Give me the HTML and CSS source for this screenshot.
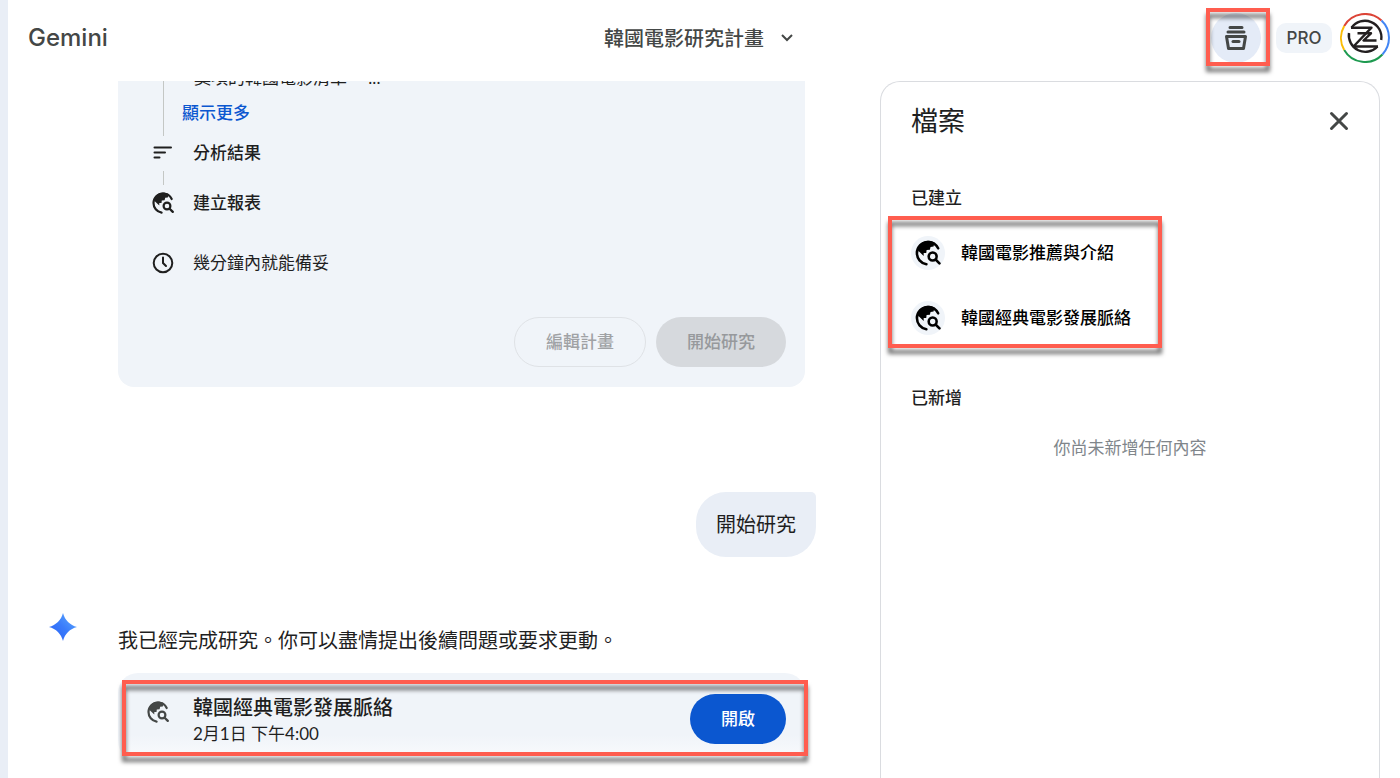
FILE: index.html
```html
<!DOCTYPE html>
<html lang="zh-TW">
<head>
    <meta charset="UTF-8">
    <meta name="viewport" content="width=device-width, initial-scale=1.0">
    <title>Gemini</title>
    <link rel="stylesheet" href="styles.css">
</head>
<body>
    <svg class="symbols" aria-hidden="true">
        <symbol id="icon-research" viewBox="0 0 24 24">
            <path fill="none" stroke="currentColor" stroke-width="2.2" stroke-linecap="round" d="M10.6 21.600C5.800 20.800 2.500 16.800 2.500 12A9.500 9.500 0 0 1 12 2.500c4 0 7.200 2.200 8.700 5.500"/>
            <path fill="currentColor" d="M12 1.500c2 0 4 .5 5.500 1.500L16.800 6.500l-2.600.3-.6 2.400-2.800.3-.3 2.500H8.300v2.500L3 9.500C4 5 7.500 1.500 12 1.500z"/>
            <circle cx="16" cy="15" r="3.400" fill="none" stroke="currentColor" stroke-width="2.200"/>
            <path fill="none" stroke="currentColor" stroke-width="2.300" stroke-linecap="round" d="M18.600 17.700l3.200 3.200"/>
        </symbol>
    </svg>

    <aside class="rail"></aside>

    <div class="app">
        <header class="topbar">
            <span class="brand">Gemini</span>
            <button type="button" class="chat-title">
                韓國電影研究計畫
                <svg width="14" height="10" viewBox="0 0 14 10"><path d="M2 2l5 5 5-5"/></svg>
            </button>
            <div class="account">
                <button type="button" class="files-btn" aria-label="檔案">
                    <svg width="24" height="26" viewBox="0 0 24 26">
                        <path d="M6 2.500h12M4 7h16M2.500 11.500h19l-2 12h-15z"/>
                        <path d="M9 16.500h6"/>
                    </svg>
                    <span class="mark mark-files"></span>
                </button>
                <span class="badge">PRO</span>
                <button type="button" class="avatar" aria-label="帳戶">
                    <svg width="50" height="50" viewBox="0 0 50 50">
                        <g fill="none" stroke-width="2">
                            <path stroke="#dc4437" d="M4.200 13A24 24 0 0 1 41.500 7.600"/>
                            <path stroke="#4285f4" d="M41.500 7.600A24 24 0 0 1 42.400 41.500"/>
                            <path stroke="#1e9a50" d="M42.400 41.500A24 24 0 0 1 4.200 37"/>
                            <path stroke="#fbbc05" d="M4.200 37A24 24 0 0 1 4.200 13"/>
                        </g>
                        <g fill="none" stroke="#231f20" stroke-width="2.400" stroke-linejoin="round">
                            <path d="M11.500 14.700A16.500 16.500 0 0 1 41.200 27"/>
                            <path d="M37.500 33.500A16.500 16.500 0 0 1 9 20"/>
                            <path d="M11 14.700h20.500L13.500 33.500H38"/>
                            <path d="M17.500 20.300h13.500L23.500 27.500h13"/>
                        </g>
                    </svg>
                </button>
            </div>
        </header>

        <div class="content">
            <main class="chat">
                <section class="plan">
                    <p class="plan-detail">獎項的韓國電影清單。 ...</p>
                    <button type="button" class="more">顯示更多</button>
                    <ul class="steps">
                        <li>
                            <svg width="24" height="24" viewBox="0 0 24 24"><path class="line" d="M3.500 6.500h16.500M3.500 11.500h10.500M3.500 16.500h5"/></svg>
                            分析結果
                        </li>
                        <li>
                            <svg width="24" height="24"><use href="#icon-research"/></svg>
                            建立報表
                        </li>
                        <li class="eta">
                            <svg width="24" height="24" viewBox="0 0 24 24"><path class="line" d="M12 6.500V12l3 3"/><circle class="line" cx="12" cy="12" r="9.300"/></svg>
                            幾分鐘內就能備妥
                        </li>
                    </ul>
                    <div class="plan-actions">
                        <button type="button" class="btn btn-outline" disabled>編輯計畫</button>
                        <button type="button" class="btn btn-gray" disabled>開始研究</button>
                    </div>
                </section>

                <p class="bubble">開始研究</p>

                <section class="reply">
                    <svg class="spark" width="28" height="28" viewBox="0 0 28 28">
                        <defs>
                            <linearGradient id="spark-fill" x1="0" y1="1" x2="1" y2="0">
                                <stop offset="0" stop-color="#2a5ff6"/>
                                <stop offset="0.500" stop-color="#3a7cfb"/>
                                <stop offset="1" stop-color="#62b0ff"/>
                            </linearGradient>
                        </defs>
                        <path fill="url(#spark-fill)" d="M14 0c1.800 7 7 12.200 14 14-7 1.800-12.200 7-14 14C12.200 21 7 15.800 0 14 7 12.200 12.200 7 14 0z"/>
                    </svg>
                    <div class="reply-body">
                        <p class="reply-text">我已經完成研究。你可以盡情提出後續問題或要求更動。</p>
                        <article class="report">
                            <svg class="report-icon" width="24" height="24"><use href="#icon-research"/></svg>
                            <div class="report-info">
                                <h3>韓國經典電影發展脈絡</h3>
                                <p>2月1日 下午4:00</p>
                            </div>
                            <button type="button" class="btn btn-primary">開啟</button>
                            <span class="mark mark-report"></span>
                        </article>
                    </div>
                </section>
            </main>

            <aside class="files">
                <div class="files-head">
                    <h2>檔案</h2>
                    <button type="button" class="close" aria-label="關閉">
                        <svg width="20" height="20" viewBox="0 0 20 20"><path d="M2.500 2.500l15 15M17.500 2.500l-15 15"/></svg>
                    </button>
                </div>
                <h3>已建立</h3>
                <ul class="file-list">
                    <li>
                        <a href="#">
                            <span class="file-icon"><svg width="28" height="28"><use href="#icon-research"/></svg></span>
                            韓國電影推薦與介紹
                        </a>
                    </li>
                    <li>
                        <a href="#">
                            <span class="file-icon"><svg width="28" height="28"><use href="#icon-research"/></svg></span>
                            韓國經典電影發展脈絡
                        </a>
                    </li>
                    <li class="mark mark-list" aria-hidden="true"></li>
                </ul>
                <h3>已新增</h3>
                <p class="empty">你尚未新增任何內容</p>
            </aside>
        </div>
    </div>
</body>
</html>
```
FILE: styles.css
```css
* {
    box-sizing: border-box;
}
body {
    margin: 0;
    height: 100vh;
    display: flex;
    overflow: hidden;
    background: #fff;
    color: #1f1f1f;
    font-family: Lato, "Noto Sans CJK TC", sans-serif;
    font-size: 17px;
    line-height: 24px;
}
h2, h3, p, ul {
    margin: 0;
    padding: 0;
    font-size: 17px;
    font-weight: 400;
}
ul {
    list-style: none;
}
button {
    padding: 0;
    border: none;
    background: none;
    color: inherit;
    font: inherit;
    cursor: pointer;
}
svg {
    display: block;
    flex: none;
}
.symbols {
    position: absolute;
    width: 0;
    height: 0;
}
.rail {
    flex: none;
    width: 8px;
    background: #e9eef6;
}
.app {
    flex: 1;
    min-width: 0;
    display: flex;
    flex-direction: column;
}

/* header */
.topbar {
    flex: none;
    height: 81px;
    padding: 0 10px 5px 20px;
    display: grid;
    grid-template-columns: 1fr auto 1fr;
    align-items: center;
    color: #444746;
}
.brand {
    font-family: Inter, sans-serif;
    font-size: 24px;
    font-weight: 500;
}
.chat-title {
    display: flex;
    align-items: center;
    gap: 16px;
    margin-right: 20px;
    font-size: 20px;
    font-weight: 500;
}
.chat-title svg path,
.files-btn svg path,
.close svg path {
    fill: none;
    stroke: #444746;
    stroke-width: 2;
}
.account {
    justify-self: end;
    display: flex;
    align-items: center;
}
.files-btn {
    position: relative;
    width: 50px;
    height: 50px;
    margin-right: 15px;
    display: flex;
    align-items: center;
    justify-content: center;
    border-radius: 50%;
    background: #e4ebf7;
}
.files-btn svg path {
    stroke-width: 3;
    stroke-linejoin: round;
    stroke-linecap: round;
}
.badge {
    width: 56px;
    margin-right: 8px;
    border-radius: 10px;
    background: #f0f4f9;
    font-family: Inter, sans-serif;
    font-size: 17px;
    font-weight: 500;
    line-height: 30px;
    text-align: center;
}

/* red highlight frames */
.mark {
    position: absolute;
    border: 4px solid #ff5d4f;
    filter: drop-shadow(0 6px 2px rgba(0, 0, 0, 0.55));
    pointer-events: none;
}
.mark-files {
    inset: -5px -9px -3px -5px;
}
.mark-list {
    inset: -4px 217px 2px 7px;
}
.mark-report {
    inset: 7px -3px 5px 4px;
}

/* conversation */
.content {
    flex: 1;
    min-height: 0;
    display: flex;
    padding-right: 20px;
}
.chat {
    flex: 1;
    min-width: 0;
    padding: 0 64px 0 41px;
    display: flex;
    flex-direction: column;
    overflow: hidden;
}
.plan {
    flex: none;
    margin: 0 11px 0 69px;
    padding: 0 19px 20px 33px;
    border-radius: 0 0 16px 16px;
    background: #f0f4f9;
    overflow: hidden;
}
.plan-detail {
    margin: -15px 0 0 12px;
    padding-left: 30px;
    border-left: 1px solid #c4c7c5;
}
.more {
    display: block;
    margin-left: 12px;
    padding: 11px 0 11px 18px;
    border-left: 1px solid #c4c7c5;
    color: #0b57d0;
    font-weight: 500;
}
.steps li {
    position: relative;
    display: flex;
    align-items: center;
    gap: 18px;
    margin-bottom: 26px;
    font-weight: 500;
}
.steps li:first-child {
    margin-top: 5px;
}
.steps li:first-child::after {
    content: "";
    position: absolute;
    left: 12px;
    top: 30px;
    width: 1px;
    height: 14px;
    background: #c4c7c5;
}
.steps .eta {
    margin: 36px 0 42px;
    font-weight: 400;
}
.line {
    fill: none;
    stroke: currentColor;
    stroke-width: 2;
    stroke-linecap: round;
}
.plan-actions {
    display: flex;
    justify-content: flex-end;
    gap: 10px;
}
.btn {
    height: 50px;
    padding: 0 31px;
    border-radius: 25px;
    font-weight: 500;
}
.btn-outline {
    border: 1px solid #dfe2e6;
    color: #a0a2a5;
}
.btn-gray {
    background: #d6d9dd;
    color: #97999c;
}
.btn-primary {
    background: #0b57d0;
    color: #fff;
}
.bubble {
    align-self: flex-end;
    flex: none;
    margin-top: 105px;
    padding: 20px;
    border-radius: 30px 5px 30px 30px;
    background: #e9eef6;
    font-size: 20px;
    line-height: 25px;
}
.reply {
    flex: none;
    display: flex;
    gap: 41px;
    margin-top: 56px;
}
.reply-body {
    flex: 1;
    min-width: 0;
    padding: 12px 11px 0 0;
}
.reply-text {
    font-size: 20px;
    line-height: 30px;
}
.report {
    position: relative;
    display: flex;
    align-items: center;
    margin-top: 18px;
    padding: 19px 19px 15px 28px;
    border-radius: 20px;
    background: linear-gradient(#f0f4f9 70%, #fafbfd);
}
.report-icon {
    align-self: flex-start;
    margin: 8px 23px 0 0;
    color: #444746;
}
.report-info {
    flex: 1;
}
.report h3 {
    font-size: 20px;
    font-weight: 500;
    line-height: 30px;
}

/* files panel */
.files {
    flex: none;
    width: 500px;
    border: 1px solid #dadce0;
    border-bottom: none;
    border-radius: 20px 20px 0 0;
}
.files-head {
    display: flex;
    align-items: center;
    justify-content: space-between;
    padding: 19px 30px 0;
}
.files-head h2 {
    font-size: 27px;
    line-height: 40px;
}
.files-head svg path {
    stroke-width: 3;
    stroke-linecap: round;
}
.files h3 {
    padding-left: 30px;
    font-weight: 500;
}
.files .files-head + h3 {
    margin-top: 45px;
}
.file-list {
    position: relative;
    margin: 10px 0 36px;
}
.file-list a {
    display: flex;
    align-items: center;
    gap: 16px;
    height: 65px;
    padding-left: 30px;
    color: #000;
    font-weight: 500;
    text-decoration: none;
}
.file-icon {
    width: 34px;
    height: 34px;
    display: flex;
    align-items: center;
    justify-content: center;
    border-radius: 50%;
    background: #f0f4f9;
}
.empty {
    margin-top: 26px;
    color: #80868b;
    text-align: center;
}
```
